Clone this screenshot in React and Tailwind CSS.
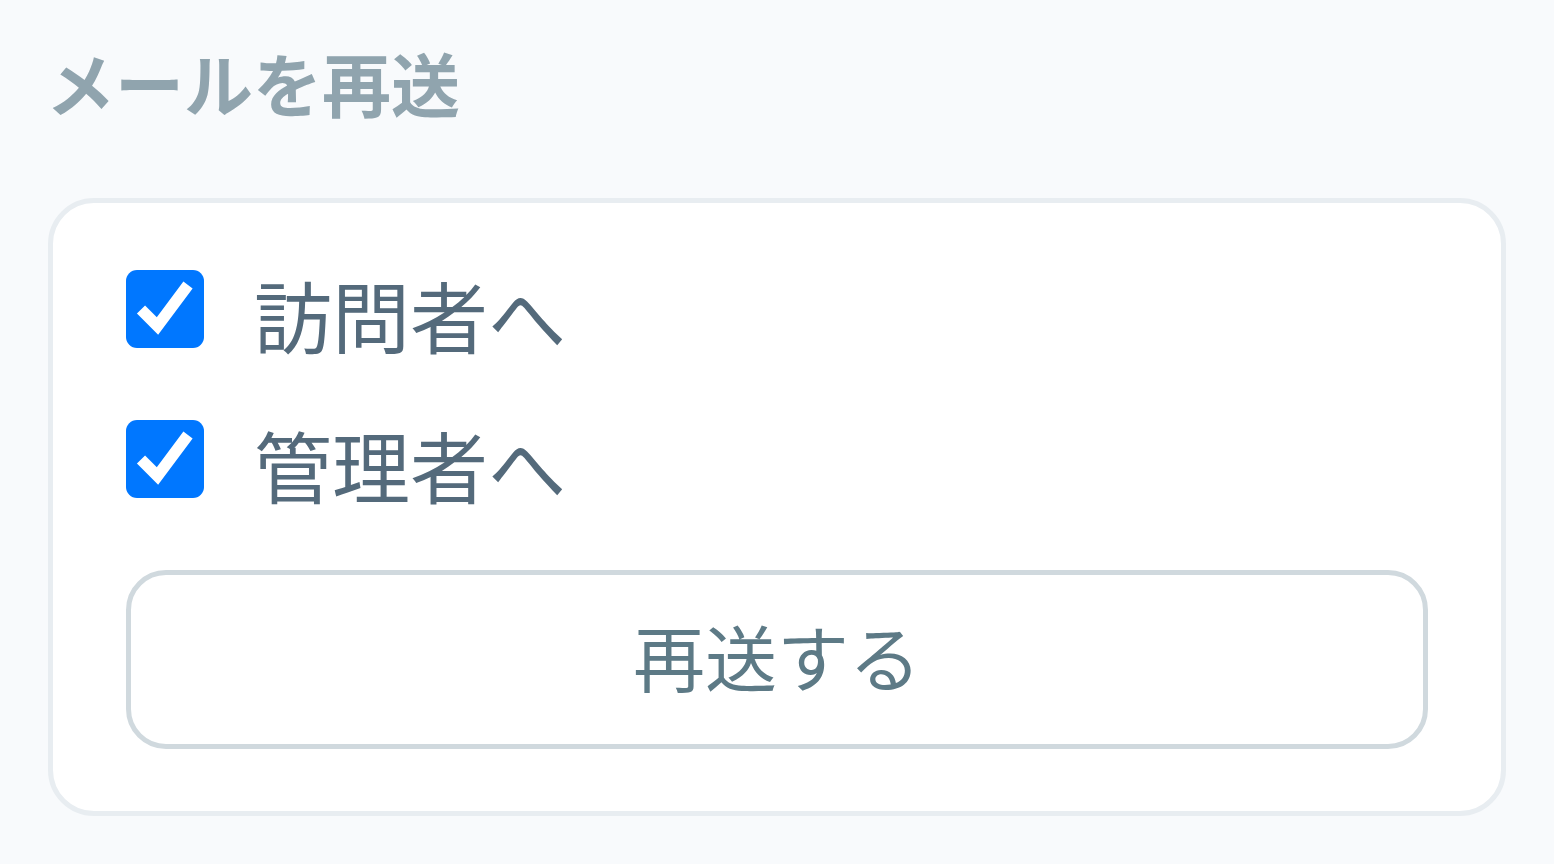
import { useState } from "react";

const jp = { fontFamily: '"Noto Sans CJK JP", "Noto Sans", sans-serif' };

const Check = ({ checked, onChange, label }) => (
  <label className="flex items-center h-[78px] cursor-pointer select-none">
    <button
      type="button"
      onClick={onChange}
      className={`w-[78px] h-[78px] shrink-0 rounded-[11px] flex items-center justify-center ${
        checked ? "bg-[#0077ff]" : "bg-white border-[4px] border-[#cfd8dc]"
      }`}
    >
      {checked && (
        <svg width="78" height="78" viewBox="0 0 78 78">
          <path d="M15 39.5 L31.5 56 L62 15" fill="none" stroke="#fff" strokeWidth="11.5" strokeLinejoin="miter" />
        </svg>
      )}
    </button>
    <span className="ml-[50px] mt-[10px] text-[78px] leading-[78px] text-[#546a7b]">{label}</span>
  </label>
);

export default function App() {
  const [visitor, setVisitor] = useState(true);
  const [admin, setAdmin] = useState(true);

  return (
    <div className="min-h-screen w-full bg-[#f8fafc] px-[48px] pt-[32px]" style={jp}>
      <h2 className="text-[69px] leading-[100px] font-bold text-[#90a4ae] -ml-[2px]">メールを再送</h2>

      <div className="mt-[66px] w-[1458px] bg-white border-[5px] border-[#e8edf1] rounded-[46px] pt-[67px] pb-[62px] px-[73px]">
        <div className="flex flex-col gap-[72px]">
          <Check label="訪問者へ" checked={visitor} onChange={() => setVisitor(!visitor)} />
          <Check label="管理者へ" checked={admin} onChange={() => setAdmin(!admin)} />
          <button
            type="button"
            className="h-[179px] w-full rounded-[40px] border-[5px] border-[#d0d9de] bg-white pb-[10px] text-[72px] text-[#5d7a86] flex items-center justify-center"
          >
            再送する
          </button>
        </div>
      </div>
    </div>
  );
}
